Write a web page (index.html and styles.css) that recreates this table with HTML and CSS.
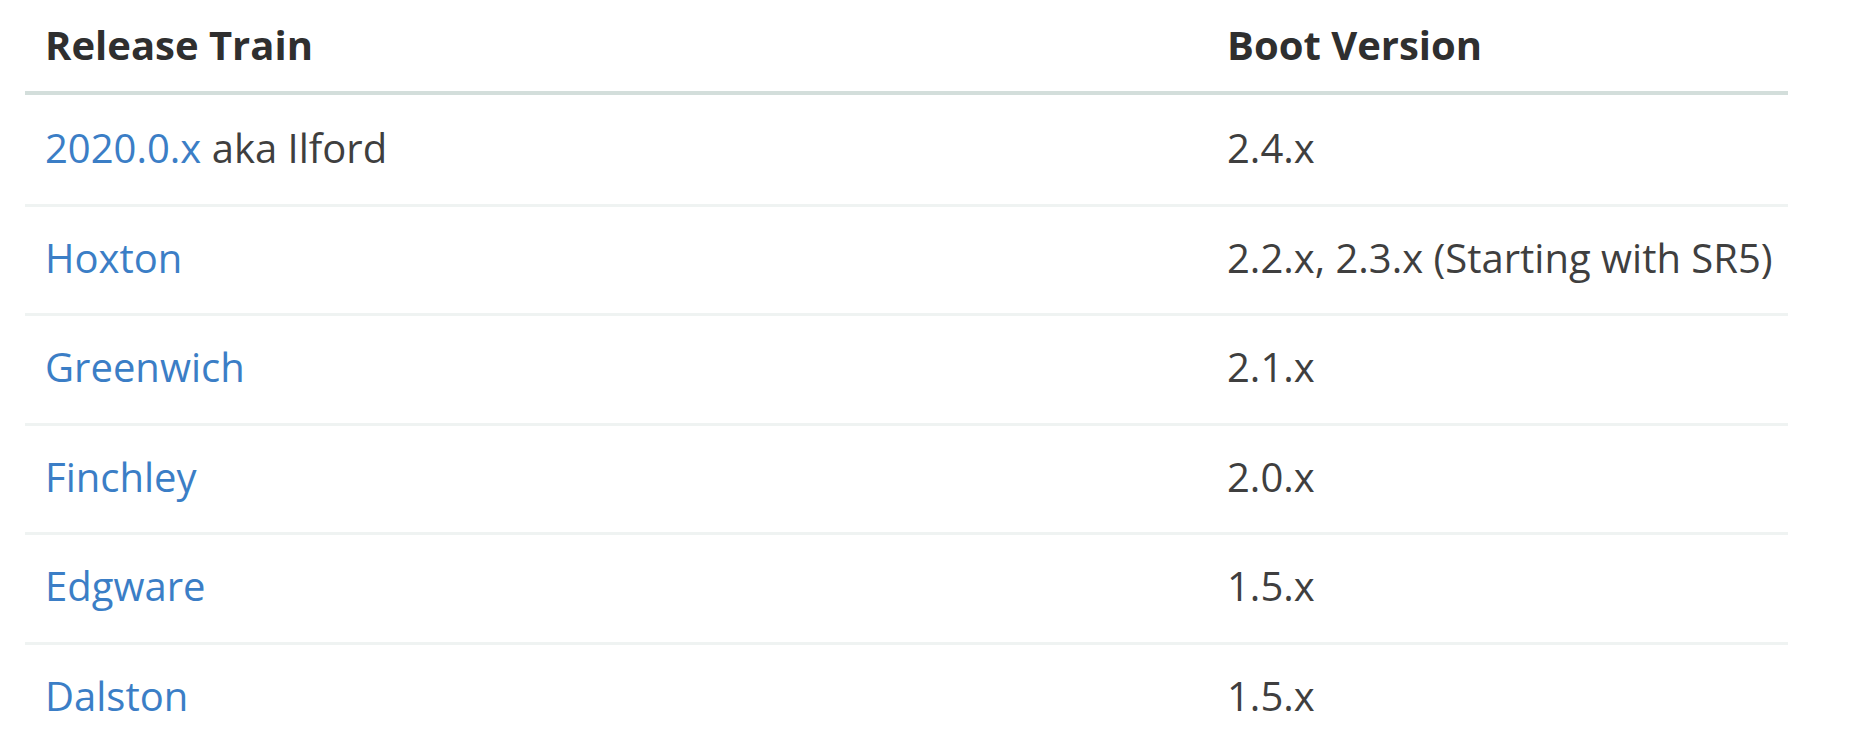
FILE: index.html
```html
<!DOCTYPE html>
<html lang="en">
<head>
<meta charset="utf-8">
<title>Release Train</title>
<link rel="stylesheet" href="styles.css">
</head>
<body>
<table class="trains">
  <colgroup>
    <col class="col-train">
    <col class="col-boot">
  </colgroup>
  <thead>
    <tr><th>Release Train</th><th>Boot Version</th></tr>
  </thead>
  <tbody>
    <tr class="first"><td><a href="#">2020.0.x</a> aka Ilford</td><td>2.4.x</td></tr>
    <tr><td><a href="#">Hoxton</a></td><td>2.2.x, 2.3.x (Starting with SR5)</td></tr>
    <tr><td><a href="#">Greenwich</a></td><td>2.1.x</td></tr>
    <tr><td><a href="#">Finchley</a></td><td>2.0.x</td></tr>
    <tr><td><a href="#">Edgware</a></td><td>1.5.x</td></tr>
    <tr><td><a href="#">Dalston</a></td><td>1.5.x</td></tr>
  </tbody>
</table>
</body>
</html>
```

FILE: styles.css
```css
html, body {
  margin: 0;
  padding: 0;
  background: #ffffff;
}
body {
  font-family: "Open Sans", "Noto Sans", sans-serif;
  font-size: 40px;
  line-height: 60px;
  color: #3f3f3f;
  padding-left: 25px;
}
.trains {
  width: 1763px;
  border-collapse: collapse;
  table-layout: fixed;
}
.col-train { width: 1182px; }
.trains th {
  text-align: left;
  font-weight: 700;
  color: #2f2f2f;
  padding: 14.5px 20px 16.5px;
  border-bottom: 4px solid #d3dedb;
}
.trains td {
  padding: 21px 20px 25.5px;
  border-bottom: 3px solid #eff3f2;
  white-space: nowrap;
}
.trains .first td {
  padding-top: 23px;
}
.trains a {
  color: #3b7ec6;
  text-decoration: none;
}
```
